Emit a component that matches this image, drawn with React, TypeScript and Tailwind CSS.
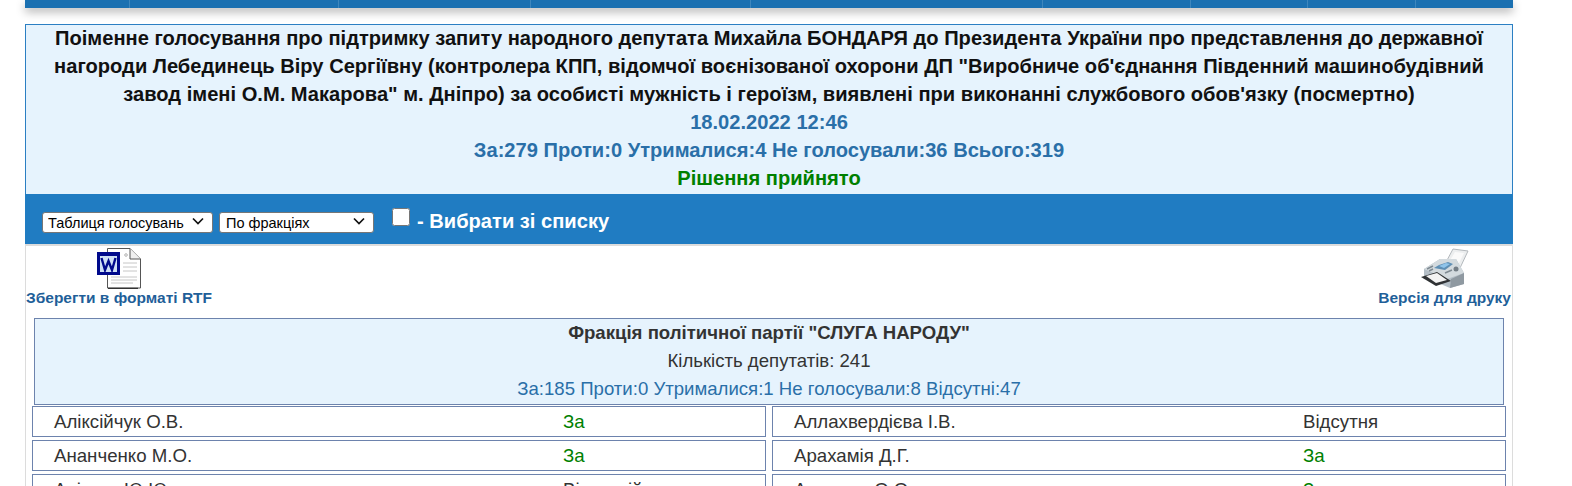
const rows = [
  ["Аліксійчук О.В.", "За", "Аллахвердієва І.В.", "Відсутня"],
  ["Ананченко М.О.", "За", "Арахамія Д.Г.", "За"],
  ["Арістов Ю.Ю.", "Відсутній", "Арсенюк О.О.", "За"],
];

function Cell({ name, vote }: { name: string; vote: string }) {
  return (
    <div className="flex h-[31px] w-[734px] items-center border border-[#6d83ad] text-[18.67px]">
      <span className="ml-[21px] w-[509px] text-[#333333]">{name}</span>
      <span className={vote === "За" ? "text-[#008000]" : "text-[#333333]"}>{vote}</span>
    </div>
  );
}

function Chevron() {
  return (
    <svg className="pointer-events-none absolute right-[9px] top-[6px]" width="12" height="8" viewBox="0 0 12 8">
      <path d="M1 1.5L6 6.5L11 1.5" fill="none" stroke="#111" strokeWidth="1.7" />
    </svg>
  );
}

function WordIcon() {
  return (
    <svg width="44" height="41" viewBox="0 0 44 41">
      <path d="M10.5 .5H33L43.5 11V40H10.5Z" fill="#fff" stroke="#555" />
      <path d="M41 40.5H11" stroke="#333" strokeWidth="1.5" />
      <path d="M33 .5V11H43.5" fill="#efefef" stroke="#555" />
      <path d="M26 15H40M26 19H40M26 23H40M14 29H40M14 32H40M14 35H36" stroke="#c6c6c6" />
      <path d="M27 7H31M29 5V9" stroke="#d0d0d0" strokeWidth="2" />
      <rect x="0" y="4" width="23" height="23" fill="#000a8c" />
      <rect x="3" y="8" width="17" height="16" fill="#cfe0f5" />
      <path d="M4.5 10L8 22L11.5 13L15 22L18.5 10" fill="none" stroke="#000a8c" strokeWidth="2.4" />
    </svg>
  );
}

function FaxIcon() {
  return (
    <svg width="48" height="41" viewBox="0 0 48 41">
      <path d="M24 16L32 1L47 3L39 20Z" fill="#eceeef" stroke="#b3b8bc" />
      <path d="M28 14L34 4L43 5L37 17Z" fill="#fafafa" />
      <path d="M3 21L19 11H35L43 25V36L29 40L3 29Z" fill="#b4bec6" />
      <path d="M3 21L19 11H35L43 25L26 31Z" fill="#d3dade" />
      <path d="M13 20L18 17L27 14L32 16L24 22Z" fill="#5f8fb4" />
      <path d="M18 18L25 15L29 16L23 20Z" fill="#8fc4ea" />
      <path d="M6 21L12 18M8 23L12 21M24 25L31 22" stroke="#7f8a92" strokeWidth="1.5" />
      <path d="M0 29L16 24L30 33L15 38Z" fill="#2f3234" />
      <path d="M5 28L16 25L26 32L15 35Z" fill="#f3f3f3" />
      <path d="M29 40L43 36V25L30 31Z" fill="#8f99a1" />
      <circle cx="35" cy="21" r="2.5" fill="#737d85" />
    </svg>
  );
}

export default function App() {
  return (
    <div className="h-[486px] w-[1572px] overflow-hidden bg-white font-['Liberation_Sans',Arial,sans-serif]">
      <div className="ml-[25px] w-[1488px]">
        <div className="flex h-[8px] bg-[#1a70b1] shadow-[0_4px_10px_rgba(0,0,0,0.3)]">
          <div className="w-[105px] border-r border-[#3d86bd]" />
          <div className="w-[209px] border-r border-[#3d86bd]" />
          <div className="w-[192px] border-r border-[#3d86bd]" />
          <div className="w-[220px] border-r border-[#3d86bd]" />
          <div className="w-[292px] border-r border-[#3d86bd]" />
          <div className="w-[148px] border-r border-[#3d86bd]" />
          <div className="w-[117px] border-r border-[#3d86bd]" />
          <div className="w-[108px] border-r border-[#3d86bd]" />
        </div>

        <div className="mt-[16px] h-[170px] border border-b-0 border-[#2b7fc3] bg-[#e6f3fd] text-center text-[20.13px] font-bold leading-[28px]">
          <div className="mt-[-1px] text-[#111111]">
            <div>Поіменне голосування про підтримку запиту народного депутата Михайла БОНДАРЯ до Президента України про представлення до державної</div>
            <div>нагороди Лебединець Віру Сергіївну (контролера КПП, відомчої воєнізованої охорони ДП "Виробниче об'єднання Південний машинобудівний</div>
            <div>завод імені О.М. Макарова" м. Дніпро) за особисті мужність і героїзм, виявлені при виконанні службового обов'язку (посмертно)</div>
          </div>
          <div className="text-[#2a6fa8]">18.02.2022 12:46</div>
          <div className="text-[#2a6fa8]">За:279 Проти:0 Утрималися:4 Не голосували:36 Всього:319</div>
          <div className="text-[#008000]">Рішення прийнято</div>
        </div>

        <div className="flex h-[50px] items-center bg-[#207cc2] pl-[17px]">
          <div className="relative mt-[5px] h-[21px] w-[171px]">
            <select className="h-full w-full appearance-none rounded-[3px] border border-[#767676] bg-white pl-[5px] text-[14.5px] text-black" defaultValue="a">
              <option value="a">Таблиця голосувань</option>
            </select>
            <Chevron />
          </div>
          <div className="relative ml-[6px] mt-[5px] h-[21px] w-[155px]">
            <select className="h-full w-full appearance-none rounded-[3px] border border-[#767676] bg-white pl-[6px] text-[14.5px] text-black" defaultValue="a">
              <option value="a">По фракціях</option>
            </select>
            <Chevron />
          </div>
          <input type="checkbox" className="mb-[4px] ml-[18px] size-[18px]" />
          <span className="ml-[7px] mt-[5px] text-[20.13px] font-bold text-white">- Вибрати зі списку</span>
        </div>

        <div className="h-[242px] border-x border-t-2 border-[#dcdcdc]">
          <div className="flex justify-between pt-[2px]">
            <a className="flex flex-col items-center text-[15.5px] font-bold leading-[18px] text-[#1f5f99]">
              <WordIcon />
              <span>Зберегти в форматі RTF</span>
            </a>
            <a className="flex flex-col items-center pr-[1px] text-[15.5px] font-bold leading-[18px] text-[#1f5f99]">
              <FaxIcon />
              <span>Версія для друку</span>
            </a>
          </div>

          <div className="ml-[8px] mt-[11px] h-[87px] w-[1470px] border border-[#6d83ad] bg-[#e6f3fd] text-center text-[18.6px] leading-[28px]">
            <div className="font-bold text-[#333333]">Фракція політичної партії "СЛУГА НАРОДУ"</div>
            <div className="text-[#333333]">Кількість депутатів: 241</div>
            <div className="text-[#2a6fa8]">За:185 Проти:0 Утрималися:1 Не голосували:8 Відсутні:47</div>
          </div>

          <div className="ml-[6px] mt-[1px] grid w-[1474px] grid-cols-[734px_734px] gap-x-[6px] gap-y-[3px]">
            {rows.map((r) => [
              <Cell key={r[0]} name={r[0]} vote={r[1]} />,
              <Cell key={r[2]} name={r[2]} vote={r[3]} />,
            ])}
          </div>
        </div>
      </div>
    </div>
  );
}
